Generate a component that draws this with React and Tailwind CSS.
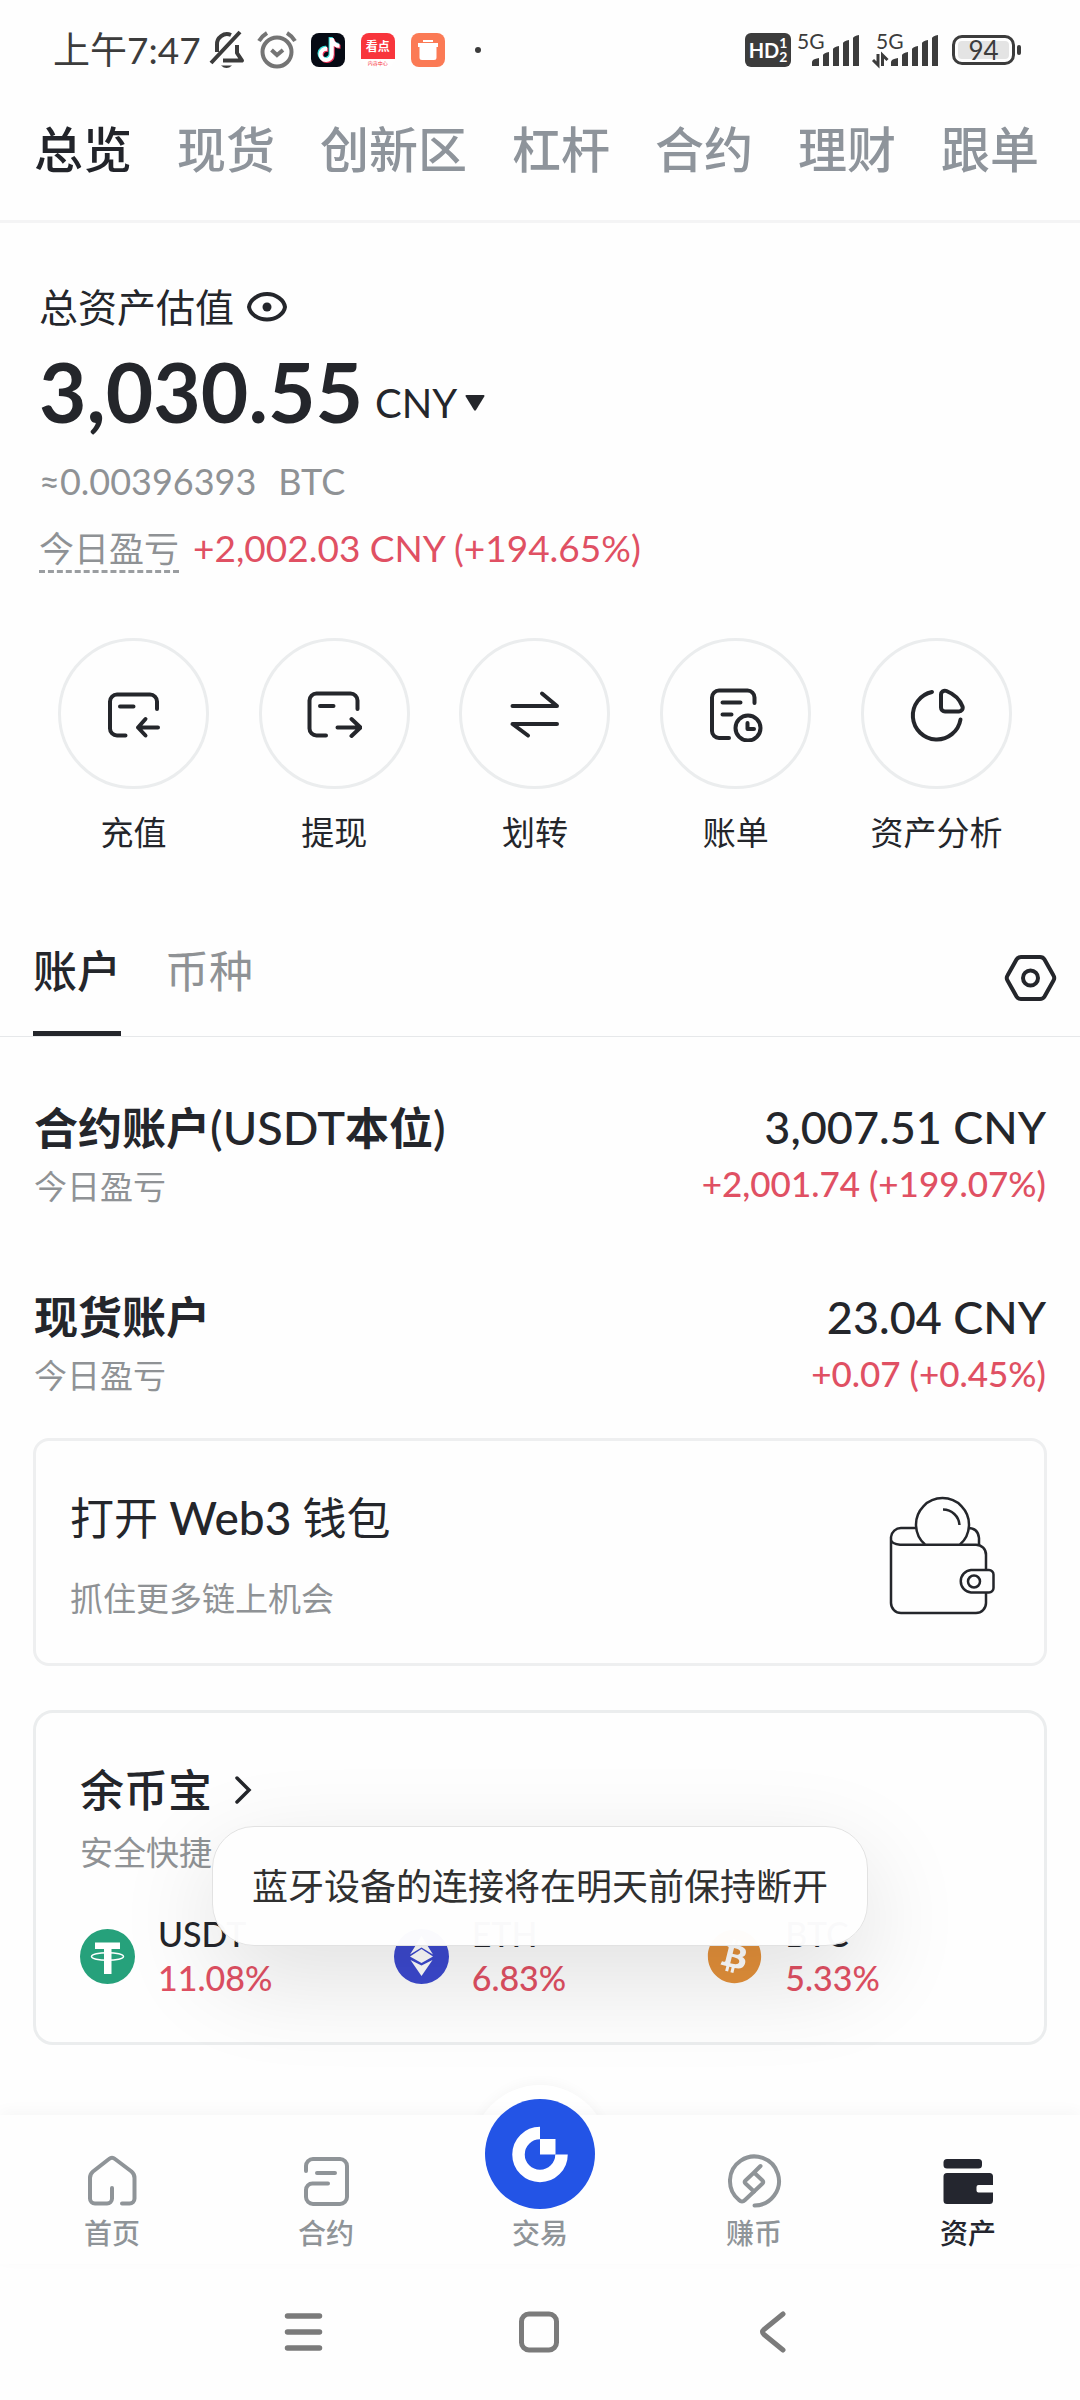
import { useState } from "react";
import { FaBitcoin, FaTiktok } from "react-icons/fa";

const topTabs = ["总览", "现货", "创新区", "杠杆", "合约", "理财", "跟单"];

const actions = [
  {
    label: "充值",
    icon: (
      <>
        <path d="M20.5 49.5H12a7 7 0 0 1-7-7V15.5a7 7 0 0 1 7-7h33a7 7 0 0 1 7 7V23" />
        <path d="M15 20.5h13.5M33 41.5h20M40.5 33 33 41.5l7.5 8" />
      </>
    ),
  },
  {
    label: "提现",
    icon: (
      <>
        <path d="M20 49.5H10.5a7 7 0 0 1-7-7V14.5a7 7 0 0 1 7-7h34a7 7 0 0 1 7 7V23" />
        <path d="M14 20h13.5M31.5 41.5h23M45.5 33l9 8.5-9 8.5" />
      </>
    ),
  },
  {
    label: "划转",
    icon: (
      <>
        <path d="M5.5 20H50L35 7.5" />
        <path d="M50 38H5.5L21 49.5" />
      </>
    ),
  },
  {
    label: "账单",
    icon: (
      <>
        <path d="M21 52H11a7 7 0 0 1-7-7V11.5a7 7 0 0 1 7-7h28.5a7 7 0 0 1 7 7V17" />
        <path d="M14.5 16.5h18M14.5 28.5h9" />
        <circle cx="40" cy="42" r="12.5" />
        <path d="M39.5 37v6H46" />
      </>
    ),
  },
  {
    label: "资产分析",
    icon: (
      <>
        <path d="M23 6A24 24 0 1 0 51.5 33.5" />
        <path d="M32 9a4 4 0 0 1 5.5-4C45 8 51 14 53.5 20.5a3.8 3.8 0 0 1-3.5 5H36a4 4 0 0 1-4-4z" />
      </>
    ),
  },
];

const accounts = [
  {
    name: (
      <>
        合约账户<span className="text-[47px] font-medium">(USDT</span>本位<span className="text-[47px] font-medium">)</span>
      </>
    ),
    amount: "3,007.51 CNY",
    pnl: "+2,001.74 (+199.07%)",
  },
  { name: "现货账户", amount: "23.04 CNY", pnl: "+0.07 (+0.45%)" },
];

const TetherIcon = () => (
  <svg viewBox="0 0 55 55" className="size-[55px] shrink-0">
    <circle cx="27.5" cy="27.5" r="27.5" fill="#26a17b" />
    <path d="M15 13.5h25V20h-8.5v25H24V20h-9z" fill="#fff" />
    <ellipse cx="27.5" cy="27.5" rx="16" ry="3.8" fill="none" stroke="#fff" strokeWidth="1.5" />
  </svg>
);

const EthIcon = () => (
  <svg viewBox="0 0 55 55" className="size-[55px] shrink-0">
    <circle cx="27.5" cy="27.5" r="27.5" fill="#3c49cf" />
    <path d="M27.5 7 16 25.5l11.5-7 11.5 7z" fill="#fff" />
    <path d="m27.5 20-11.5 7.5 11.5 6.5L39 27.5z" fill="#fff" />
    <path d="M16.5 31l11 16 11-16-11 5.5z" fill="#fff" />
  </svg>
);

const BtcIcon = () => (
  <span className="size-[55px] shrink-0 rounded-full bg-[radial-gradient(#fff_60%,transparent_62%)]">
    <FaBitcoin className="size-full text-[#e3903a]" />
  </span>
);

const coins = [
  { name: "USDT", rate: "11.08%", Icon: TetherIcon },
  { name: "ETH", rate: "6.83%", Icon: EthIcon },
  { name: "BTC", rate: "5.33%", Icon: BtcIcon },
];

const NavIcon = ({ children }) => (
  <svg
    viewBox="0 0 56 56"
    className="size-14"
    fill="none"
    stroke="currentColor"
    strokeWidth="4"
    strokeLinecap="round"
    strokeLinejoin="round"
  >
    {children}
  </svg>
);

const Signal = ({ data }) => (
  <div className="relative w-[64px] h-[34px]">
    <span className="absolute left-0 -top-1 text-[21px] leading-6">5G</span>
    <svg viewBox="0 0 64 34" className="size-full overflow-visible" fill="currentColor">
      <path d="M15 33v-4q0-3 7-4v8zM26 33V22q1-2 6-3v14zM36 33V16q1-2 6-3v20zM46 33V10q1-2 6-3v26zM56 33V5q1-2 6-3v31z" />
      {data && (
        <path
          d="M2 21v11l-5-5M6.5 33V22l5 5"
          fill="none"
          stroke="currentColor"
          strokeWidth="3"
        />
      )}
    </svg>
  </div>
);

const StatusBar = () => (
  <div className="flex items-center h-[100px] pl-[53px] pr-[59px] text-[#3c3c3c]">
    <span className="text-[37px] leading-10 whitespace-nowrap">上午7:47</span>
    <svg viewBox="0 0 36 40" className="ml-2 w-9 h-10" fill="none" stroke="currentColor" strokeWidth="4">
      <path d="M8 22V15a10 10 0 0 1 14-10M28 15v8l5 7.5H14M2 33 31 2" strokeLinejoin="round" />
      <path d="M12 35.5h11q-5.5 5-11 0z" fill="currentColor" stroke="none" />
    </svg>
    <svg viewBox="0 0 40 40" className="ml-3 size-10 text-[#747474]" fill="none" stroke="currentColor" strokeWidth="4">
      <circle cx="20" cy="22" r="14.5" />
      <path d="m14.5 20 5.5 5 6-5M2 11q3-5 8-8M38 11q-3-5-8-8" />
    </svg>
    <span className="relative ml-[14px] size-[34px] rounded-lg bg-[#060a14]">
      <FaTiktok className="absolute left-[5px] top-1 size-6 text-[#35e0dc]" />
      <FaTiktok className="absolute left-[7px] top-[6px] size-6 text-[#f2345a]" />
      <FaTiktok className="absolute left-[6px] top-[5px] size-6 text-white" />
    </span>
    <span className="flex flex-col ml-4 size-[34px] rounded-lg overflow-hidden bg-white text-center">
      <span className="h-[26px] bg-[#f8353c] text-white text-[12px] font-bold leading-[28px]">看点</span>
      <span className="text-[#f8353c] text-[5px] leading-[8px]">内容中心</span>
    </span>
    <svg viewBox="0 0 34 34" className="ml-4 size-[34px]">
      <rect width="34" height="34" rx="8" fill="#fb7a55" />
      <path d="M12 7h10v2H12zM7 10h20v4h-1.5v10.5a2.5 2.5 0 0 1-2.5 2.5H11a2.5 2.5 0 0 1-2.5-2.5V14H7z" fill="#fff" />
    </svg>
    <span className="ml-[30px] size-[6px] rounded-full bg-[#3c3c3c]" />
    <div className="flex items-center ml-auto">
      <span className="flex items-center justify-center w-[46px] h-[34px] rounded-md bg-[#3c3c3c] text-white font-bold">
        <span className="text-[20px] leading-6">HD</span>
        <span className="flex flex-col text-[14px] leading-[14px]">
          <span>1</span>
          <span>2</span>
        </span>
      </span>
      <span className="ml-[6px]">
        <Signal />
      </span>
      <span className="ml-[15px]">
        <Signal data />
      </span>
      <span className="flex items-center justify-center ml-3 w-[63px] h-[30px] border-[3px] border-current rounded-[10px] p-[3px]">
        <span className="w-full h-full bg-[#e4e4e4] rounded-sm text-center text-[26px] leading-[18px]">94</span>
      </span>
      <span className="ml-[2px] w-1 h-[10px] rounded-sm bg-current" />
    </div>
  </div>
);

const navLabel = "text-[28px] leading-9 font-medium";

const App = () => {
  const [topTab, setTopTab] = useState("总览");
  const [listTab, setListTab] = useState("账户");

  return (
    <div className="min-h-screen flex flex-col bg-[#fefefe] text-[#24262b] font-[Lato,'Noto_Sans_CJK_SC',sans-serif]">
      <StatusBar />

      {/* Top tabs */}
      <nav className="flex justify-between pt-5 pb-[42px] pl-[34px] pr-[41px] border-b-[3px] border-[#f4f4f5]">
        {topTabs.map((tab) => (
          <button
            key={tab}
            onClick={() => setTopTab(tab)}
            className={`text-[49px] leading-[58px] font-medium whitespace-nowrap ${
              topTab === tab ? "text-[#22242a]" : "text-[#8e949b]"
            }`}
          >
            {tab}
          </button>
        ))}
      </nav>

      {/* Balance */}
      <section className="pt-[60px] px-[39px]">
        <div className="flex items-center gap-3">
          <h1 className="text-[39px] leading-[48px]">总资产估值</h1>
          <button aria-label="隐藏资产">
            <svg viewBox="0 0 42 32" className="w-[42px] h-8" fill="none" stroke="currentColor" strokeWidth="4">
              <path d="M3 16C4 9 12 3 21 3S38 9 39 16C38 23 30 28.5 21 28.5S4 23 3 16z" strokeLinejoin="round" />
              <circle cx="21" cy="16" r="4.5" fill="currentColor" stroke="none" />
            </svg>
          </button>
        </div>
        <div className="flex items-end gap-3 mt-5">
          <span className="text-[82px] leading-[80px] font-bold">3,030.55</span>
          <button className="flex items-center gap-2 pb-1 text-[40px] leading-[48px]">
            CNY
            <svg viewBox="0 0 20 16" className="w-5 h-4" fill="currentColor">
              <path d="M1.5 0h17q1.5 0 .8 1.5L11 15q-1 1.5-2 0L.7 1.5Q0 0 1.5 0z" />
            </svg>
          </button>
        </div>
        <p className="flex gap-[22px] mt-[28px] text-[36px] leading-[44px] text-[#8f9295]">
          <span>≈0.00396393</span>
          <span>BTC</span>
        </p>
        <p className="flex gap-[14px] mt-[23px] leading-[44px]">
          <span className="border-b-[3px] border-dashed border-[#9a9da0] text-[35px] text-[#8f9295]">今日盈亏</span>
          <span className="text-[37px] text-[#e05063]">+2,002.03 CNY (+194.65%)</span>
        </p>
      </section>

      {/* Quick actions */}
      <section className="grid grid-cols-5 mt-[65px] pl-[33px] pr-[43px]">
        {actions.map((a) => (
          <button key={a.label} className="flex flex-col items-center gap-[23px]">
            <span className="flex items-center justify-center size-[151px] rounded-full border-[3px] border-[#ebedee]">
              <NavIcon>{a.icon}</NavIcon>
            </span>
            <span className="text-[33px] leading-10 whitespace-nowrap">{a.label}</span>
          </button>
        ))}
      </section>

      {/* Accounts */}
      <section className="mt-[91px]">
        <div className="flex items-start justify-between pl-[33px] pr-[22px] border-b border-[#e6e8ea]">
          <div className="flex gap-[44px]">
            {["账户", "币种"].map((tab) => (
              <button
                key={tab}
                onClick={() => setListTab(tab)}
                className={`pb-8 border-b-[5px] text-[44px] leading-[56px] ${
                  listTab === tab
                    ? "border-[#24262b] text-[#24262b] font-medium"
                    : "border-transparent text-[#8f9295]"
                }`}
              >
                {tab}
              </button>
            ))}
          </div>
          <button aria-label="设置" className="mt-[7px]">
            <NavIcon>
              <path d="M19 7h19q3 0 4.5 2.5l9 16q1.5 2.5 0 5l-9 16Q41 49 38 49H19q-3 0-4.5-2.5l-9-16q-1.5-2.5 0-5l9-16Q16 7 19 7z" />
              <circle cx="28.5" cy="28" r="7.5" />
            </NavIcon>
          </button>
        </div>

        <ul className="flex flex-col gap-[81px] pt-[62px] px-[34px]">
          {accounts.map((acc) => (
            <li key={acc.pnl} className="flex justify-between">
              <div>
                <h2 className="text-[44px] leading-[56px] font-bold">{acc.name}</h2>
                <p className="mt-2 text-[33px] leading-[44px] text-[#8f9295]">今日盈亏</p>
              </div>
              <div className="text-right">
                <p className="text-[45px] leading-[56px] font-medium">{acc.amount}</p>
                <p className="mt-[6px] text-[35px] leading-[44px] font-medium text-[#e05063]">{acc.pnl}</p>
              </div>
            </li>
          ))}
        </ul>
      </section>

      {/* Web3 wallet */}
      <section className="flex items-center justify-between mt-[41px] mx-[33px] pt-[49px] pb-[43px] pl-[34px] pr-[48px] border-[3px] border-[#eeeff0] rounded-2xl">
        <div>
          <h2 className="text-[44px] leading-[56px]">
            打开 <span className="text-[46px] font-medium">Web3</span> 钱包
          </h2>
          <p className="mt-[30px] text-[33px] leading-[44px] text-[#8f9295]">抓住更多链上机会</p>
        </div>
        <svg viewBox="0 0 107 119" className="w-[107px] h-[119px]" fill="none" stroke="currentColor" strokeWidth="2.5">
          <path d="M27 32H12a10 10 0 0 0-10 9v66a10 10 0 0 0 10 10h75a10 10 0 0 0 10-10V97M97 73V59a10 10 0 0 0-10-10.3H11Q3 48 2 44M79 32q10 0 11 10v7" />
          <path d="M36 48.5A26.5 26.5 0 1 1 71 48.5M54 13.5a16.5 16.5 0 0 1 16.5 15.5" />
          <path d="M82 74h18a4.5 4.5 0 0 1 4.5 4.5v13.5a4.5 4.5 0 0 1-4.5 4.5H82a11.3 11.3 0 0 1 0-22.5z" />
          <circle cx="85" cy="85.5" r="6" />
        </svg>
      </section>

      {/* Earn */}
      <section className="relative mt-[44px] mb-[69px] mx-[33px] pt-[49px] pb-[42px] px-[44px] border-[3px] border-[#ebedee] rounded-[20px]">
        <h2>
          <a href="#" className="flex items-center gap-[22px] text-[44px] leading-[56px] font-medium">
            余币宝
            <svg viewBox="0 0 18 28" className="w-[18px] h-7" fill="none" stroke="currentColor" strokeWidth="3.5">
              <path d="m3 2 12 12L3 26" strokeLinecap="round" />
            </svg>
          </a>
        </h2>
        <p className="mt-3 text-[33px] leading-[44px] text-[#8f9295]">安全快捷</p>
        <ul className="grid grid-cols-3 gap-[21px] mt-[38px]">
          {coins.map(({ name, rate, Icon }) => (
            <li key={name} className="flex items-center gap-[23px]">
              <Icon />
              <div className="text-[34px] leading-[44px] font-medium">
                <p>{name}</p>
                <p className="text-[#e05063]">{rate}</p>
              </div>
            </li>
          ))}
        </ul>

        {/* Toast */}
        <div
          role="status"
          className="absolute left-1/2 top-[113px] -translate-x-1/2 px-[39px] py-[35px] rounded-[42px] border border-[#e2e2e2] bg-[#fefefe]/98 text-[36px] leading-[48px] text-[#303030] whitespace-nowrap shadow-[0_32px_100px_rgba(0,0,0,0.12)]"
        >
          蓝牙设备的连接将在明天前保持断开
        </div>
      </section>

      {/* Bottom navigation */}
      <nav className="relative mt-auto">
        <div className="absolute left-1/2 -top-[30px] -translate-x-1/2 size-[138px] rounded-full bg-white shadow-[0_-3px_12px_rgba(0,0,0,0.03)]" />
        <div className="relative grid grid-cols-5 items-end px-[5px] pb-[13px] h-[149px] bg-[#fefefe] text-[#8f9498] shadow-[0_-4px_14px_rgba(0,0,0,0.03)]">
          <a href="#" className="flex flex-col items-center gap-[6px]">
            <NavIcon>
              <path d="M28 35v10.5a5 5 0 0 1-5 5H11a5 5 0 0 1-5-5V25q0-4 3-6.5L25 6q3-2.5 6 0l16.5 12.5q3 2.5 3 6.5v20.5a5 5 0 0 1-5 5H38" />
            </NavIcon>
            <span className={navLabel}>首页</span>
          </a>
          <a href="#" className="flex flex-col items-center gap-[6px]">
            <NavIcon>
              <path d="M8 18v-5a7 7 0 0 1 7-7h27a7 7 0 0 1 7 7v31a7 7 0 0 1-7 7H15a7 7 0 0 1-7-7v-7a6.5 6.5 0 0 1 6.5-6.5H30M19 20h18" />
            </NavIcon>
            <span className={navLabel}>合约</span>
          </a>
          {/* raised trade button sticks out above the bar */}
          <a href="#" className="flex flex-col items-center gap-[6px] -mt-8">
            <svg viewBox="0 0 110 110" className="size-[110px]">
              <circle cx="55" cy="55" r="55" fill="#2354e6" />
              <path d="M55 34a21.5 21.5 0 1 0 21.5 21.5" fill="none" stroke="#fff" strokeWidth="12.5" />
              <path d="M55 40h15.5v15.5H55z" fill="#fff" />
            </svg>
            <span className={navLabel}>交易</span>
          </a>
          <a href="#" className="flex flex-col items-center gap-[6px]">
            <NavIcon>
              <path d="M28.5 52.5A24.5 24.5 0 1 0 13 47q3 3 6 0l9-8.5" />
              <path d="m28 19.5 8.5 8q1.5 1.5 0 3L28 38.5l-8.5-8q-1.5-1.5 0-3zL34.5 13" />
            </NavIcon>
            <span className={navLabel}>赚币</span>
          </a>
          <a href="#" aria-current="page" className="flex flex-col items-center gap-[6px] text-[#24262f]">
            <svg viewBox="0 0 56 56" className="size-14" fill="currentColor">
              <rect x="3.5" y="6" width="38.5" height="9.5" rx="3.5" />
              <path d="M7 20h42.5a3.5 3.5 0 0 1 3.5 3.5V32H38.5a2 2 0 0 0-2 2v3.5a2 2 0 0 0 2 2H53v8a3.5 3.5 0 0 1-3.5 3.5H7a3.5 3.5 0 0 1-3.5-3.5v-24A3.5 3.5 0 0 1 7 20z" />
            </svg>
            <span className={navLabel}>资产</span>
          </a>
        </div>
      </nav>

      {/* System keys */}
      <div className="flex items-center justify-between h-[136px] pl-[276px] pr-[278px] text-[#7b7b7b]">
        <button aria-label="最近任务">
          <NavIcon>
            <path d="M11.5 12h32M11.5 28h32M11.5 44h32" strokeWidth="5.5" />
          </NavIcon>
        </button>
        <button aria-label="主屏幕">
          <NavIcon>
            <rect x="10.5" y="10" width="35" height="36" rx="7.5" strokeWidth="5" />
          </NavIcon>
        </button>
        <button aria-label="返回">
          <NavIcon>
            <path d="M37 10 18 25.5q-3 2.5 0 5L37 46" strokeWidth="5" />
          </NavIcon>
        </button>
      </div>
    </div>
  );
};

export default App;
